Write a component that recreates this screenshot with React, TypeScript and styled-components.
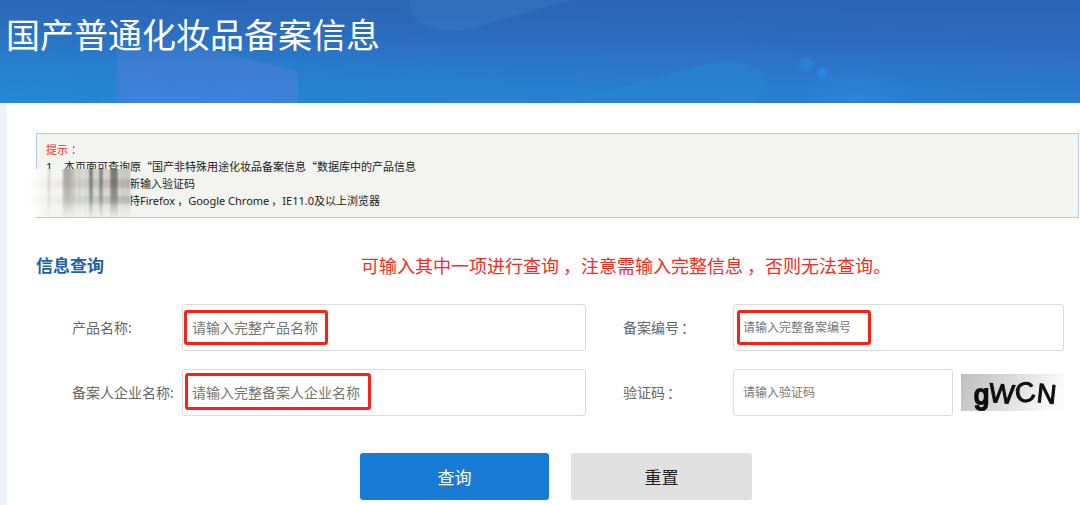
import React from "react";
import styled, { createGlobalStyle } from "styled-components";

const GlobalStyle = createGlobalStyle`
  *, *::before, *::after { box-sizing: border-box; }
  body {
    margin: 0;
    background: #eff3f8;
    font-family: "Noto Sans", "Noto Sans CJK SC", sans-serif;
    color: #222;
  }
  input, button { font-family: inherit; }
`;

const Banner = styled.header`
  position: relative;
  height: 103px;
  padding: 11px 6px;
  overflow: hidden;
  background: linear-gradient(180deg, #2c64b3 0%, #2d6fc4 45%, #2880d2 100%);
`;

const BannerArt = styled.svg`
  position: absolute;
  inset: 0;
  width: 100%;
  height: 100%;
`;

const Title = styled.h1`
  position: relative;
  margin: 0;
  font-size: 34px;
  line-height: 48px;
  font-weight: 400;
  color: #fff;
`;

const Sheet = styled.main`
  margin-left: 7px;
  padding: 30px 1px 5px 29px;
  background: #fff;
`;

const Notice = styled.section`
  position: relative;
  height: 85px;
  padding: 7px 9px;
  border: 1px solid #b4c8ee;
  background: #f3f4ef;
  font-size: 11px;
  line-height: 17px;
  color: #222;
`;

const NoticeTitle = styled.div`
  color: #fb2a22;
`;

const NoticeList = styled.ol`
  margin: 0;
  padding: 0;
  list-style: none;
`;

const NoticeItem = styled.li<{ $indent: number }>`
  padding-left: ${(p) => p.$indent}px;
  white-space: nowrap;
`;

const ItemNumber = styled.span`
  display: inline-block;
  width: 18px;
`;

const Quote = styled.span`
  font-family: "Noto Sans CJK SC", sans-serif;
`;

const Smear = styled.svg`
  position: absolute;
  left: -7px;
  top: 35px;
  width: 101px;
  height: 49px;
`;

const Punct = styled.span<{ $pad: number }>`
  padding-left: ${(p) => p.$pad}px;
`;

const SectionHead = styled.div`
  display: grid;
  grid-template-columns: 325px 1fr;
  align-items: center;
  margin-top: 33px;
  line-height: 30px;
`;

const SectionTitle = styled.h2`
  margin: 0;
  font-size: 17px;
  font-weight: 700;
  color: #1c62a8;
`;

const Advice = styled.p`
  margin: 0;
  font-size: 18px;
  color: #fb2a1c;
  white-space: nowrap;
`;

const Form = styled.form`
  margin: 23px 15px 0 36px;
`;

const Fields = styled.div`
  display: grid;
  grid-template-columns: 110px 404fr 37px 110px 331fr;
  row-gap: 18px;
  align-items: center;
`;

const Label = styled.label<{ $second?: boolean }>`
  grid-column: ${(p) => (p.$second ? 4 : 1)};
  padding-bottom: 2px;
  font-size: 14px;
  color: #666;
  white-space: nowrap;
`;

const Field = styled.div`
  position: relative;
  display: flex;
  align-items: center;
  gap: 8px;
`;

const TextInput = styled.input<{ $small?: boolean }>`
  flex: 1;
  min-width: 0;
  height: 47px;
  padding: 0 9px;
  border: 1px solid #dcdcdc;
  border-radius: 3px;
  background: #fff;
  font-size: ${(p) => (p.$small ? 12 : 14)}px;
  color: #333;
  &::placeholder { color: #757575; opacity: 1; }
`;

const Mark = styled.span<{ $w: number; $h: number; $x: number; $y: number }>`
  position: absolute;
  left: ${(p) => p.$x}px;
  top: ${(p) => p.$y}px;
  width: ${(p) => p.$w}px;
  height: ${(p) => p.$h}px;
  border: 3px solid #f9221a;
  border-radius: 3px;
  pointer-events: none;
`;

const Captcha = styled.svg`
  flex: none;
  width: 103px;
  height: 37px;
`;

const Actions = styled.div`
  display: flex;
  gap: 22px;
  margin: 37px 0 0 288px;
`;

const Button = styled.button<{ $primary?: boolean }>`
  width: ${(p) => (p.$primary ? 189 : 181)}px;
  height: 47px;
  padding: 0;
  border: 0;
  border-radius: 3px;
  font-size: 17px;
  background: ${(p) => (p.$primary ? "#187bd6" : "#e0e0e0")};
  color: ${(p) => (p.$primary ? "#fff" : "#222")};
`;

const streaks: [number, number, string, number][] = [
  [18, 2, "#8a8a80", 0.35],
  [33, 8, "#77776f", 0.6],
  [41, 5, "#8c8c84", 0.5],
  [47, 5, "#9b9b92", 0.45],
  [53, 5, "#9b9b92", 0.4],
  [59, 4, "#404a4e", 0.75],
  [64, 4, "#8b8b84", 0.4],
  [69, 4, "#3f4c50", 0.7],
  [74, 5, "#8b8580", 0.35],
  [80, 8, "#4a4a46", 0.75],
  [89, 12, "#85857e", 0.4],
];

export default function App() {
  return (
    <>
      <GlobalStyle />
      <Banner>
        <BannerArt viewBox="0 0 1080 103" preserveAspectRatio="none" aria-hidden="true">
          <defs>
            <linearGradient id="glow" x1="0" y1="1" x2="1" y2="0.6">
              <stop offset="0" stopColor="#2090d8" stopOpacity="0.6" />
              <stop offset="0.6" stopColor="#2484d2" stopOpacity="0.15" />
              <stop offset="1" stopColor="#2c6ac8" stopOpacity="0.2" />
            </linearGradient>
            <linearGradient id="block" x1="0" y1="0" x2="0" y2="1">
              <stop offset="0" stopColor="#4478cc" stopOpacity="0.1" />
              <stop offset="0.4" stopColor="#447cd4" stopOpacity="0.7" />
              <stop offset="1" stopColor="#3f80dc" stopOpacity="0.9" />
            </linearGradient>
            <radialGradient id="halo">
              <stop offset="0" stopColor="#3085e0" stopOpacity="0.6" />
              <stop offset="1" stopColor="#3085e0" stopOpacity="0" />
            </radialGradient>
            <linearGradient id="shade" x1="0" y1="0" x2="0" y2="1">
              <stop offset="0" stopColor="#2c64b3" stopOpacity="0.7" />
              <stop offset="0.6" stopColor="#2c64b3" stopOpacity="0" />
            </linearGradient>
          </defs>
          <rect width="1080" height="103" fill="url(#glow)" />
          <rect width="1080" height="103" fill="url(#shade)" />
          <path d="M117 34 L180 42 L298 71 V103 H117 Z" fill="url(#block)" />
          <path d="M94 103 Q180 76 250 92 L280 103 Z" fill="#3f84e0" opacity="0.3" />
          <path d="M409 0 C409 25 436 36 472 28 L572 0 Z" fill="#3780c6" opacity="0.35" />
          <path d="M562 103 L700 65 C736 56 768 66 767 84 Q766 95 750 103 Z" fill="#2b88d5" opacity="0.4" />
          <ellipse cx="856" cy="98" rx="60" ry="35" fill="url(#halo)" />
          <circle cx="806" cy="64" r="7" fill="#2b86dc" opacity="0.65" />
          <circle cx="822" cy="73" r="5" fill="#2b8be4" opacity="0.8" />
        </BannerArt>
        <Title>国产普通化妆品备案信息</Title>
      </Banner>
      <Sheet>
        <Notice>
          <NoticeTitle>提示<Punct $pad={3}>：</Punct></NoticeTitle>
          <NoticeList>
            <NoticeItem $indent={0}>
              <ItemNumber>1</ItemNumber>
              本页面可查询原<Quote>“</Quote>国产非特殊用途化妆品备案信息<Quote>“</Quote>数据库中的产品信息
            </NoticeItem>
            <NoticeItem $indent={83}>新输入验证码</NoticeItem>
            <NoticeItem $indent={83}>
              持Firefox<Punct $pad={2}>，</Punct>Google Chrome<Punct $pad={2}>，</Punct>IE11.0及以上浏览器
            </NoticeItem>
          </NoticeList>
          <Smear viewBox="0 0 101 49" aria-hidden="true">
            <defs>
              <filter id="soft" x="-50%" y="-20%" width="200%" height="140%">
                <feGaussianBlur stdDeviation="1 1" />
              </filter>
              <linearGradient id="base" x1="0" y1="0" x2="1" y2="0">
                <stop offset="0" stopColor="#ffffff" />
                <stop offset="0.15" stopColor="#f5f5f2" />
                <stop offset="1" stopColor="#f3f4ef" />
              </linearGradient>
              <linearGradient id="bandRed" x1="0" y1="0" x2="1" y2="0">
                <stop offset="0" stopColor="#c9b7ac" stopOpacity="0" />
                <stop offset="1" stopColor="#b59a8c" stopOpacity="0.5" />
              </linearGradient>
              <linearGradient id="bandGray" x1="0" y1="0" x2="1" y2="0">
                <stop offset="0" stopColor="#b8bab4" stopOpacity="0" />
                <stop offset="1" stopColor="#8f928c" stopOpacity="0.45" />
              </linearGradient>
              <linearGradient id="fade" x1="0" y1="0" x2="0" y2="1">
                <stop offset="0" stopColor="#fff" />
                <stop offset="0.5" stopColor="#fff" stopOpacity="0.8" />
                <stop offset="1" stopColor="#fff" stopOpacity="0.05" />
              </linearGradient>
              <mask id="fadeMask">
                <rect width="101" height="49" fill="url(#fade)" />
              </mask>
            </defs>
            <rect width="101" height="48" fill="url(#base)" />
            <g filter="url(#soft)">
              <rect y="10" width="101" height="9" fill="url(#bandRed)" />
              <rect y="27" width="101" height="8" fill="url(#bandGray)" />
            </g>
            <g mask="url(#fadeMask)">
              <g filter="url(#soft)">
                {streaks.map(([x, w, color, o]) => (
                  <rect key={x} x={x} y="-4" width={w} height="58" fill={color} opacity={o} />
                ))}
              </g>
            </g>
          </Smear>
        </Notice>
        <SectionHead>
          <SectionTitle>信息查询</SectionTitle>
          <Advice>
            可输入其中一项进行查询<Punct $pad={4}>，</Punct>注意需输入完整信息<Punct $pad={4}>，</Punct>否则无法查询。
          </Advice>
        </SectionHead>
        <Form onSubmit={(e) => e.preventDefault()}>
          <Fields>
            <Label htmlFor="product">产品名称:</Label>
            <Field>
              <TextInput id="product" placeholder="请输入完整产品名称" />
              <Mark $x={2} $y={6} $w={144} $h={35} />
            </Field>
            <Label $second htmlFor="record">备案编号<Punct $pad={2}>：</Punct></Label>
            <Field>
              <TextInput $small id="record" placeholder="请输入完整备案编号" />
              <Mark $x={4} $y={6} $w={134} $h={35} />
            </Field>
            <Label htmlFor="company">备案人企业名称:</Label>
            <Field>
              <TextInput id="company" placeholder="请输入完整备案人企业名称" />
              <Mark $x={3} $y={4} $w={186} $h={37} />
            </Field>
            <Label $second htmlFor="code">验证码<Punct $pad={2}>：</Punct></Label>
            <Field>
              <TextInput $small id="code" placeholder="请输入验证码" />
              <Captcha viewBox="0 0 103 37" role="img" aria-label="gWCN">
                <defs>
                  <linearGradient id="paper" x1="0" y1="0" x2="1" y2="0.2">
                    <stop offset="0" stopColor="#bdbdbd" />
                    <stop offset="0.5" stopColor="#dadada" />
                    <stop offset="1" stopColor="#fbfbfb" />
                  </linearGradient>
                  <filter id="ink">
                    <feGaussianBlur stdDeviation="0.5" />
                  </filter>
                </defs>
                <rect width="103" height="37" fill="url(#paper)" />
                <g fill="#0c0c0c" stroke="#0c0c0c" fontFamily="Liberation Sans, sans-serif" filter="url(#ink)">
                  <text x="13" y="30" fontSize="27" strokeWidth="2">g</text>
                  <text x="28" y="29" fontSize="27" strokeWidth="1" transform="rotate(5 42 20)">W</text>
                  <text x="54" y="28" fontSize="28" strokeWidth="1" transform="rotate(-10 64 19)">C</text>
                  <text x="76" y="29" fontSize="27" strokeWidth="1" transform="rotate(6 85 20)">N</text>
                </g>
              </Captcha>
            </Field>
          </Fields>
          <Actions>
            <Button $primary type="submit">查询</Button>
            <Button type="reset">重置</Button>
          </Actions>
        </Form>
      </Sheet>
    </>
  );
}
